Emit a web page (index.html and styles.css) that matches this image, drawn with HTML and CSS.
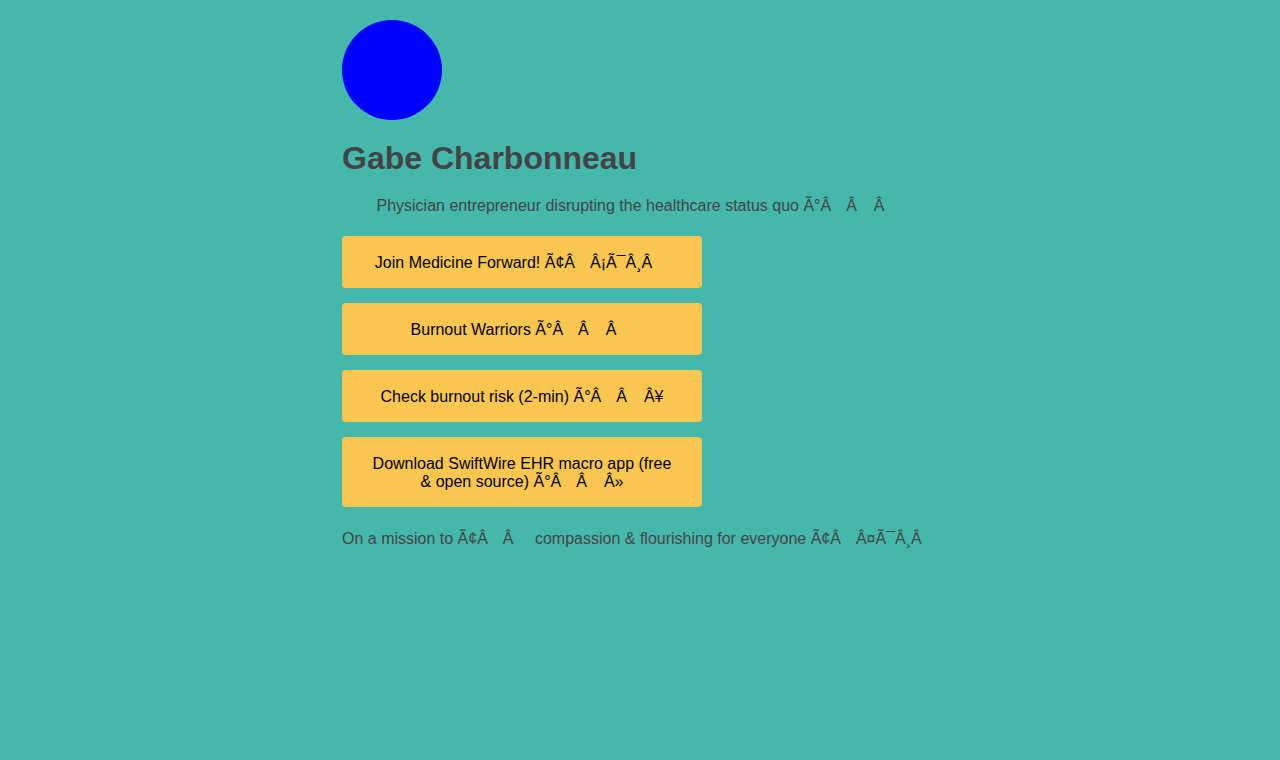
FILE: index.html
```html
<!DOCTYPE html>
<html lang="en">
<head>
<meta charset="utf-8">
<title>Gabe Charbonneau</title>
<link rel="stylesheet" href="styles.css">
</head>
<body>
<main class="page">
  <div class="avatar"></div>
  <h1 class="name">Gabe Charbonneau</h1>
  <p class="tagline">Physician entrepreneur disrupting the healthcare status quo Ã°Â<span class="cc"></span>Â<span class="cc wide"></span>Â<span class="cc wide"></span></p>
  <nav class="links">
    <a class="link" href="#">Join Medicine Forward! Ã¢Â<span class="cc"></span>Â¡Ã¯Â¸Â<span class="cc wide"></span></a>
    <a class="link" href="#">Burnout Warriors Ã°Â<span class="cc"></span>Â<span class="cc wide"></span>Â<span class="cc wide"></span></a>
    <a class="link" href="#">Check burnout risk (2-min) Ã°Â<span class="cc"></span>Â<span class="cc wide"></span>Â¥</a>
    <a class="link" href="#"><span class="line">Download SwiftWire EHR macro app (free</span><span class="line">&amp; open source) Ã°Â<span class="cc"></span>Â<span class="cc wide"></span>Â»</span></a>
  </nav>
  <p class="mission">On a mission to Ã¢Â<span class="cc"></span>Â<span class="cc wide"></span> compassion &amp; flourishing for everyone Ã¢Â<span class="cc"></span>Â¤Ã¯Â¸Â<span class="cc wide"></span></p>
</main>
</body>
</html>
```

FILE: styles.css
```css
html, body {
  margin: 0;
  padding: 0;
}

body {
  background: #45b8ac;
  font-family: "Liberation Sans", Arial, sans-serif;
  color: #444444;
  min-height: 760px;
}

.page {
  width: 596px;
  margin: 0 auto;
  padding-top: 20px;
  display: flex;
  flex-direction: column;
}

.avatar {
  width: 100px;
  height: 100px;
  border-radius: 50%;
  background: #0000ff;
}

.name {
  margin: 20px 0 0;
  font-size: 32px;
  font-weight: bold;
  line-height: 37px;
  color: #444444;
}

.tagline {
  margin: 20px 0 0;
  font-size: 16px;
  line-height: 18px;
  text-align: center;
  padding-right: 2px;
}

.cc {
  display: inline-block;
  width: 15px;
}

.cc.wide {
  width: 17px;
}

.links {
  margin-top: 21px;
  display: flex;
  flex-direction: column;
  gap: 15px;
  align-items: flex-start;
}

.link {
  box-sizing: border-box;
  width: 360px;
  padding: 18px 28px 16px;
  background: #f9c74f;
  border-radius: 4px;
  color: #000000;
  text-decoration: none;
  font-size: 16px;
  line-height: 18px;
  text-align: center;
}

.line {
  display: block;
}

.mission {
  margin: 23px 0 0;
  font-size: 16px;
  line-height: 18px;
  white-space: nowrap;
}
```
